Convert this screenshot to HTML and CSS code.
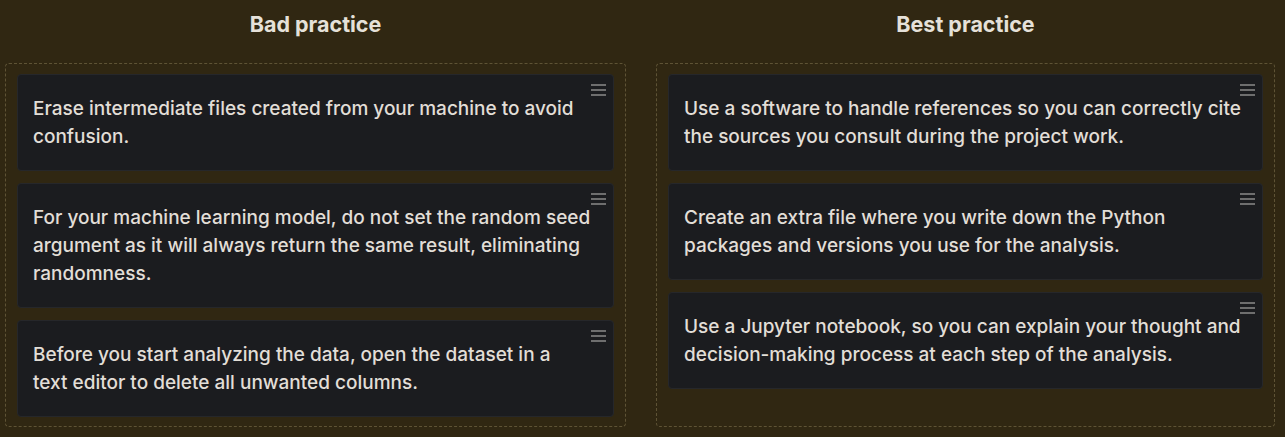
FILE: index.html
```html
<!DOCTYPE html>
<html>
<head>
<meta charset="utf-8">
<link rel="stylesheet" href="styles.css">
</head>
<body>
<div class="board">
  <section class="column">
    <h2 class="title">Bad practice</h2>
    <div class="zone">
      <div class="card"><span class="grip"><i></i><i></i><i></i></span><p>Erase intermediate files created from your machine to avoid confusion.</p></div>
      <div class="card"><span class="grip"><i></i><i></i><i></i></span><p>For your machine learning model, do not set the random seed argument as it will always return the same result, eliminating randomness.</p></div>
      <div class="card"><span class="grip"><i></i><i></i><i></i></span><p>Before you start analyzing the data, open the dataset in a text&nbsp;editor to delete all unwanted columns.</p></div>
    </div>
  </section>
  <section class="column">
    <h2 class="title">Best practice</h2>
    <div class="zone">
      <div class="card"><span class="grip"><i></i><i></i><i></i></span><p>Use a software to handle references so you can correctly cite the sources you consult during the project work.</p></div>
      <div class="card"><span class="grip"><i></i><i></i><i></i></span><p>Create an extra file where you write down the Python packages and versions you use for the analysis.</p></div>
      <div class="card"><span class="grip"><i></i><i></i><i></i></span><p>Use a Jupyter notebook, so you can explain your thought and decision-making process at each step of the analysis.</p></div>
    </div>
  </section>
</div>
</body>
</html>
```

FILE: styles.css
```css
html, body {
  margin: 0;
  padding: 0;
  background: #302712;
  height: 100%;
}
body {
  font-family: Inter, "Open Sans", sans-serif;
  color: #e2ded7;
}
.board {
  display: grid;
  grid-template-columns: 621px 619px;
  column-gap: 30px;
  padding: 0 10px 0 5px;
}
.column {
  display: flex;
  flex-direction: column;
}
.title {
  margin: 11px 0 26px;
  font-size: 21.5px;
  line-height: 26px;
  font-weight: 700;
  text-align: center;
  color: #e5e1d9;
}
.zone {
  border: 1px dashed #5e5335;
  border-radius: 4px;
  padding: 10px 11px;
  height: 342px;
  display: flex;
  flex-direction: column;
  gap: 12px;
}
.card {
  position: relative;
  background: #1b1c1f;
  border: 1px solid #26272a;
  border-radius: 4px;
  padding: 20px 15px 19px 15px;
}
.card p {
  margin: 0;
  font-size: 19px;
  line-height: 28px;
  font-weight: 500;
}
.grip {
  position: absolute;
  top: 9px;
  right: 7px;
  width: 15px;
  display: flex;
  flex-direction: column;
  gap: 3px;
}
.grip i {
  display: block;
  height: 2px;
  background: #6e6e6e;
}
```
